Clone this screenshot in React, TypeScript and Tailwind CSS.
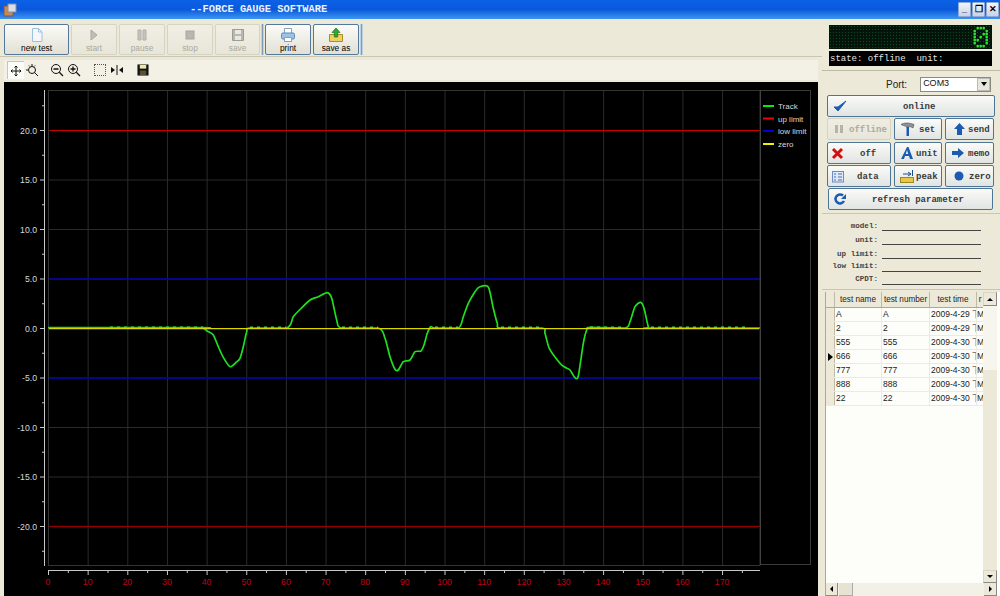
import React from 'react';

const track: [number, number][] = [
  [48, 327.6], [201, 327.6], [204, 328.6], [207, 331], [213.3, 335], [218.3, 346.7], [223.3, 357.3], [230, 366.7], [236, 362.5], [240, 358.3], [243.3, 346.7], [246.7, 331.7], [250, 328],
  [286.7, 328], [293.3, 316.7], [301, 308.5], [310, 300], [318.3, 296.7], [327.3, 292.7], [331.7, 298.3], [336.7, 320], [341.7, 328],
  [378.3, 328], [385, 338.3], [390, 356.7], [395, 369.3], [398.3, 370], [403.3, 361.7], [410, 360], [415, 351.7], [421, 351], [424, 345], [427.3, 333.3], [430.7, 326.7], [435, 328],
  [458.3, 328], [463.3, 316.7], [468.3, 303.3], [475, 291.7], [479.3, 287], [488.3, 287], [493.3, 308.3], [497.3, 323.3], [500.7, 328],
  [541.7, 328], [545, 333.3], [549.3, 348.3], [560, 363.3], [565, 367.3], [570, 370], [575, 377.7], [578.3, 376], [583.3, 343.3], [586.7, 330], [590, 327.3],
  [625, 328], [630, 321.7], [635, 306.7], [640.7, 302.3], [644, 308.3], [648.3, 326.7], [650.7, 328], [760, 328],
];

// catmull-rom through the sampled points, the plot in the picture is smoothed
const smooth = (pts: [number, number][]) => {
  let d = `M${pts[0][0]} ${pts[0][1]}`;
  for (let i = 0; i < pts.length - 1; i++) {
    const p0 = pts[i - 1] || pts[i];
    const p1 = pts[i];
    const p2 = pts[i + 1];
    const p3 = pts[i + 2] || p2;
    const long = p2[0] - p1[0] > 15;
    const k = long ? 0 : 1 / 8;
    d += ` C${p1[0] + (p2[0] - p0[0]) * k} ${p1[1] + (p2[1] - p0[1]) * k} ${p2[0] - (p3[0] - p1[0]) * k} ${p2[1] - (p3[1] - p1[1]) * k} ${p2[0]} ${p2[1]}`;
  }
  return d;
};

const xTicks = Array.from({ length: 18 }, (_, i) => i * 10);
const yTicks = [20, 15, 10, 5, 0, -5, -10, -15, -20];
const xPos = (v: number) => 44 + v * 3.965;
const yPos = (v: number) => 246.5 - v * 9.9;

const rows = [
  ['A', 'A', '2009-4-29 下午'],
  ['2', '2', '2009-4-29 下午'],
  ['555', '555', '2009-4-30 下午'],
  ['666', '666', '2009-4-30 下午'],
  ['777', '777', '2009-4-30 下午'],
  ['888', '888', '2009-4-30 下午'],
  ['22', '22', '2009-4-30 下午'],
];

const Ico = ({ children }: { children: React.ReactNode }) => (
  <svg width="16" height="16" viewBox="0 0 16 16" className="shrink-0">
    {children}
  </svg>
);

const ToolBtn = ({ w, label, off, children }: { w: string; label: string; off?: boolean; children: React.ReactNode }) => (
  <div
    className={`${w} h-[31px] flex flex-col items-center justify-between pt-[2px] pb-[1px] rounded-[2px] border bg-gradient-to-b ${
      off ? 'border-[#d6d3c2] from-[#f1efe4] to-[#e8e6d9] text-[#a9a99f]' : 'border-[#54789c] from-[#fbfbf8] to-[#e2e0d4] text-black'
    }`}
  >
    {children}
    <span className="leading-[11px]">{label}</span>
  </div>
);

const SideBtn = ({ w, label, off, cls, children }: { w: string; label: string; off?: boolean; cls: string; children: React.ReactNode }) => (
  <div
    className={`${w} h-[22px] flex items-center rounded-[2px] border bg-gradient-to-b ${cls} ${
      off ? 'border-[#d6d3c2] from-[#efede2] to-[#e8e6d9] text-[#aaa9a0]' : 'border-[#4f7596] from-[#fbfbf8] to-[#e0e4e2] text-[#3a3a3a]'
    }`}
  >
    {children}
    <span className="font-bold whitespace-pre pt-[4px]">{label}</span>
  </div>
);

const Sep = () => <div className="w-[3px] h-[31px] bg-[#7f9db9] border-x border-[#bcd0e0] -mx-[1px]" />;

const Led = () => {
  const glyph = ['01110', '10001', '10011', '10101', '11001', '10001', '01110'];
  return (
    <svg width="16" height="22" viewBox="0 0 16 22" className="mr-[3px]">
      {glyph.map((r, y) =>
        r.split('').map((c, x) =>
          c === '1' ? <rect key={`${x}-${y}`} x={x * 3 + 0.5} y={y * 3 + 1} width="2.4" height="2.4" fill="#2fe02f" /> : null,
        ),
      )}
    </svg>
  );
};

const Chart = () => (
  <svg viewBox="0 0 814 514" className="w-[814px] h-[514px] block bg-black font-['Liberation_Sans',sans-serif]">
    {xTicks.map((v) => (
      <line key={v} x1={xPos(v) + 0.5} x2={xPos(v) + 0.5} y1="8" y2="483" stroke="#2b2b2b" />
    ))}
    {yTicks.map((v) => (
      <line key={v} x1="44" x2="756" y1={yPos(v)} y2={yPos(v)} stroke="#2b2b2b" />
    ))}
    <rect x="44.5" y="8.5" width="711.5" height="475" fill="none" stroke="#333" />
    <rect x="756.5" y="8.5" width="50" height="474" fill="#000" stroke="#777" strokeDasharray="1 1" />

    {/* y axis */}
    <line x1="40.5" x2="40.5" y1="8" y2="484" stroke="#c8c8c8" />
    {yTicks.map((v) => (
      <g key={v}>
        <line x1="36" x2="40" y1={yPos(v)} y2={yPos(v)} stroke="#c8c8c8" />
        <text x="33" y={yPos(v) + 3} textAnchor="end" fontSize="8.7" fill="#d8d8d8">
          {v.toFixed(1)}
        </text>
      </g>
    ))}
    {[22.5, 17.5, 12.5, 7.5, 2.5, -2.5, -7.5, -12.5, -17.5, -22.5].map((v) => (
      <line key={v} x1="38" x2="40" y1={yPos(v)} y2={yPos(v)} stroke="#c8c8c8" />
    ))}

    {/* x axis */}
    <line x1="44" x2="756" y1="488.5" y2="488.5" stroke="#c8c8c8" />
    {xTicks.map((v) => (
      <g key={v}>
        <line x1={xPos(v) + 0.5} x2={xPos(v) + 0.5} y1="489" y2="493" stroke="#c8c8c8" />
        <line x1={xPos(v + 5) + 0.5} x2={xPos(v + 5) + 0.5} y1="489" y2="491" stroke="#c8c8c8" />
        <text x={xPos(v)} y="503" textAnchor="middle" fontSize="8.7" fill="#c00018">
          {v}
        </text>
      </g>
    ))}

    {/* limits */}
    <line x1="45" x2="755" y1="48.5" y2="48.5" stroke="#c80000" strokeWidth="1.2" />
    <line x1="45" x2="755" y1="444.5" y2="444.5" stroke="#900000" strokeWidth="1.4" />
    <line x1="45" x2="755" y1="197" y2="197" stroke="#0000b0" strokeWidth="1.3" />
    <line x1="45" x2="755" y1="296" y2="296" stroke="#0000b0" strokeWidth="1.3" />

    {/* track: points are in page coordinates */}
    <g transform="translate(-4 -82)">
      <path d={smooth(track)} fill="none" stroke="#1fe01f" strokeWidth="1.7" strokeLinejoin="round" />
      {[[110, 203], [250, 286], [342, 378], [435, 458], [501, 541], [590, 625], [651, 745]].map(([a, b]) => (
        <line key={a} x1={a} x2={b} y1="327.4" y2="327.4" stroke="#33ee33" strokeWidth="2" strokeDasharray="3 4" />
      ))}
      <line x1="49" x2="759" y1="328.6" y2="328.6" stroke="#d8d800" strokeWidth="1.2" />
    </g>

    {/* legend */}
    {[
      ['Track', '#00f000', 24],
      ['up limit', '#f00000', 36.5],
      ['low limit', '#0000e0', 49],
      ['zero', '#f0f000', 62],
    ].map(([t, c, y]) => (
      <g key={t as string}>
        <line x1="759" x2="770" y1={y as number} y2={y as number} stroke={c as string} strokeWidth="2" />
        <text x="774" y={(y as number) + 3} fontSize="8" fill="#d8d8d8">
          {t}
        </text>
      </g>
    ))}
  </svg>
);

export default function App() {
  return (
    <div className="w-[1000px] h-[596px] overflow-hidden flex flex-col bg-[#ece9d8] font-['Liberation_Sans',sans-serif] text-[8.3px] text-black">
      {/* title bar */}
      <div className="h-[19px] shrink-0 flex items-center bg-gradient-to-b from-[#0b62e6] via-[#0a58dc] to-[#3d95f0]">
        <svg width="14" height="14" viewBox="0 0 14 14" className="ml-[3px]">
          <rect x="1" y="3" width="9" height="10" fill="#c78a52" stroke="#7a5a50" />
          <rect x="5" y="1" width="8" height="8" fill="#d8dfe8" stroke="#8d8d9a" />
        </svg>
        <span className="ml-[173px] font-['Liberation_Mono',monospace] font-bold text-[10.4px] text-[#e8f2ff] whitespace-pre">--FORCE GAUGE SOFTWARE</span>
        <div className="ml-auto flex gap-[1px] pr-[1px]">
          {['_', '❐', '✕'].map((c) => (
            <div key={c} className="w-[13px] h-[15px] flex items-center justify-center bg-gradient-to-b from-[#f2f4fa] to-[#c6d3ea] border border-[#8fa9d6] rounded-[1px] text-[9px] font-bold text-black leading-none">
              {c}
            </div>
          ))}
        </div>
      </div>

      <div className="flex-1 flex min-h-0">
        {/* left side */}
        <div className="w-[822px] shrink-0 flex flex-col">
          <div className="h-[38px] shrink-0 flex items-start gap-[2px] pl-[4px] pt-[5px] border-b border-[#c8c5b2]">
            <ToolBtn w="w-[65px]" label="new test">
              <Ico>
                <path d="M3.5 1.5h6l3.5 3.5v9.5h-9.5z M9.5 1.5v3.5h3.5" fill="#f4f8fc" stroke="#9fc0dc" />
              </Ico>
            </ToolBtn>
            <ToolBtn w="w-[46px]" label="start" off>
              <Ico>
                <path d="M5 3l6 5-6 5z" fill="#c0c0b8" stroke="#a8a8a0" />
              </Ico>
            </ToolBtn>
            <ToolBtn w="w-[46px]" label="pause" off>
              <Ico>
                <path d="M4 3h3v10H4zM9 3h3v10H9z" fill="#c4c4bc" stroke="#b0b0a8" />
              </Ico>
            </ToolBtn>
            <ToolBtn w="w-[46px]" label="stop" off>
              <Ico>
                <rect x="4" y="4" width="8" height="8" fill="#b8b8b0" stroke="#a8a8a0" />
              </Ico>
            </ToolBtn>
            <ToolBtn w="w-[45px]" label="save" off>
              <Ico>
                <path d="M2.5 2.5h11v11h-11z" fill="#b8b8b0" stroke="#9c9c94" />
                <rect x="5" y="3" width="6" height="4" fill="#e8e8e0" />
                <rect x="5" y="9" width="6" height="4" fill="#e8e8e0" />
              </Ico>
            </ToolBtn>
            <Sep />
            <ToolBtn w="w-[46px]" label="print">
              <Ico>
                <path d="M4.5 1.5h7v5h-7z" fill="#fff" stroke="#8aa0bc" />
                <rect x="1.5" y="6" width="13" height="6" rx="1.5" fill="#9cc4e8" stroke="#5a88bc" />
                <rect x="4.5" y="10.5" width="7" height="4" fill="#fff" stroke="#8aa0bc" />
              </Ico>
            </ToolBtn>
            <ToolBtn w="w-[46px]" label="save as">
              <Ico>
                <path d="M1.5 7.5h13v7h-13z" fill="#f2d060" stroke="#a88a30" />
                <path d="M8 1l4 4.5H9.7V10H6.3V5.500H4z" fill="#2fa82f" stroke="#1c701c" strokeWidth="0.7" />
              </Ico>
            </ToolBtn>
            <Sep />
          </div>

          <div className="h-[20px] shrink-0 mt-[3px] flex items-center bg-[#f3f1e6] ml-[4px] mr-[4px] pl-[3px]">
            <div className="w-[17px] h-[18px] flex items-center justify-center bg-[#fbfbf8] border-l border-t border-[#c8c5b2]">
              <svg width="12" height="12" viewBox="0 0 12 12" stroke="#111" fill="none">
                <path d="M6 1v10M1 6h10M6 1L4.500 2.500M6 1l1.500 1.500M6 11L4.500 9.500M6 11l1.500-1.500M1 6l1.500-1.500M1 6l1.500 1.500M11 6L9.500 4.500M11 6L9.500 7.500" />
              </svg>
            </div>
            <svg width="14" height="14" viewBox="0 0 14 14" stroke="#111" fill="none" className="ml-[1px]">
              <circle cx="7" cy="7" r="3.500" />
              <path d="M9.500 9.500L13 13M7 1v2M4 2.500l1 1M10 2.500L9 3.500M1 7h2" />
            </svg>
            <svg width="14" height="14" viewBox="0 0 14 14" stroke="#111" fill="none" className="ml-[11px]">
              <circle cx="6" cy="6" r="4.500" />
              <path d="M9.300 9.300L13 13M3.500 6h5" strokeWidth="1.300" />
            </svg>
            <svg width="14" height="14" viewBox="0 0 14 14" stroke="#111" fill="none" className="ml-[3px]">
              <circle cx="6" cy="6" r="4.500" />
              <path d="M9.300 9.300L13 13M3.500 6h5M6 3.500v5" strokeWidth="1.300" />
            </svg>
            <div className="w-[12px] h-[12px] ml-[13px] border border-dotted border-[#555]" />
            <svg width="12" height="12" viewBox="0 0 12 12" fill="#111" className="ml-[5px]">
              <path d="M0 3l4 3-4 3zM12 3L8 6l4 3zM5.500 1h1v10h-1z" />
            </svg>
            <svg width="12" height="12" viewBox="0 0 13 13" className="ml-[14px]">
              <rect x="0.500" y="0.500" width="12" height="12" fill="#111" />
              <rect x="3" y="1" width="7" height="4" fill="#f2e6a0" />
              <rect x="3" y="7" width="7" height="5" fill="#57503a" />
            </svg>
          </div>

          <div className="mt-[2px] ml-[4px] flex-1 min-h-0">
            <Chart />
          </div>
        </div>

        {/* right side */}
        <div className="w-[178px] shrink-0 flex flex-col font-['Liberation_Mono',monospace] text-[9px] bg-[#ece9d8]">
          <div className="h-[52px] shrink-0 pl-[7px] pt-[6px] border-b border-[#bdbaa6]">
            <div className="w-[163px] h-[24px] bg-[#03150a] bg-[radial-gradient(#0d4a20_1px,transparent_1px)] bg-[length:3px_3px] flex items-center justify-end">
              <Led />
            </div>
            <div className="w-[163px] h-[15px] mt-[2px] bg-black text-[#e4e4e4] flex items-center whitespace-pre pl-[1px] pt-[2px]">
              {'state: offline  unit:'}
            </div>
          </div>

          <div className="h-[23px] shrink-0 flex items-center pt-[3px] font-['Liberation_Sans',sans-serif] text-[10px]">
            <span className="ml-[64px] text-[#222]">Port:</span>
            <div className="ml-[13px] w-[71px] h-[15px] bg-white border border-[#8c8a7c] flex items-center justify-between pl-[2px] text-[9px] text-[#111]">
              <span>COM3</span>
              <div className="w-[13px] h-[13px] bg-[#e8e6da] border border-[#bbb] flex items-center justify-center">
                <div className="w-0 h-0 border-x-[3px] border-x-transparent border-t-[4px] border-t-black" />
              </div>
            </div>
          </div>

          <div className="flex flex-col pl-[5px]">
            <div className="mt-[1px] w-[168px] h-[22px] flex items-center rounded-[2px] border border-[#4f7596] bg-gradient-to-b from-[#fbfbf8] to-[#e0e4e2] pl-[5px] text-[#3a3a3a]">
              <svg width="14" height="14" viewBox="0 0 14 14">
                <path d="M1 8l4 4 8-10-8 6z" fill="#1c5cb0" stroke="#1c5cb0" />
              </svg>
              <span className="ml-[56px] font-bold pt-[4px]">online</span>
            </div>
            <div className="flex gap-[3px] mt-[1px]">
              <SideBtn w="w-[64px]" label="offline" off cls="pl-[6px] gap-[5px]">
                <svg width="10" height="12" viewBox="0 0 10 12" fill="#b4b4ac"><path d="M1 2h3v8H1zM6 2h3v8H6z" /></svg>
              </SideBtn>
              <SideBtn w="w-[48px]" label="set" cls="pl-[5px] gap-[3px]">
                <svg width="16" height="16" viewBox="0 0 16 16">
                  <path d="M1 3.500C4 1.500 9 1.500 14 3.500L13 7C11 5.500 9.500 5.500 9 6H6.500C5.500 5 3 4.500 1 3.500z" fill="#8c9098" stroke="#4a5060" strokeWidth="0.6" />
                  <rect x="6.500" y="6" width="2.500" height="9" fill="#1c5cb0" />
                </svg>
              </SideBtn>
              <SideBtn w="w-[49px]" label="send" cls="pl-[7px] gap-[2px]">
                <svg width="13" height="14" viewBox="0 0 13 14"><path d="M6.500 1l5.500 6H9v6H4V7H1z" fill="#1c5cb0" /></svg>
              </SideBtn>
            </div>
            <div className="flex gap-[3px] mt-[2px]">
              <SideBtn w="w-[64px]" label="off" cls="pl-[3px] gap-[16px]">
                <svg width="13" height="13" viewBox="0 0 13 13" stroke="#d01010" strokeWidth="3"><path d="M2 2l9 9M11 2l-9 9" /></svg>
              </SideBtn>
              <SideBtn w="w-[48px]" label="unit" cls="pl-[5px] gap-[2px]">
                <svg width="14" height="14" viewBox="0 0 14 14"><path d="M7 1h1.500L13 13h-3l-1-3H5l-1 3H1zM5.800 8h2.400L7 4z" fill="#1c5cb0" fillRule="evenodd" /></svg>
              </SideBtn>
              <SideBtn w="w-[49px]" label="memo" cls="pl-[5px] gap-[3px]">
                <svg width="14" height="12" viewBox="0 0 14 12"><path d="M13 6L7 1v3H1v4h6v3z" fill="#1c5cb0" /></svg>
              </SideBtn>
            </div>
            <div className="flex gap-[3px] mt-[1px]">
              <SideBtn w="w-[64px]" label="data" cls="pl-[3px] gap-[12px]">
                <svg width="14" height="14" viewBox="0 0 14 14"><rect x="1.500" y="2.500" width="11" height="10.500" fill="#dfe8f4" stroke="#6a8cc0" /><path d="M3 5h2M7 5h4M3 8h2M7 8h4M3 11h2M7 11h4" stroke="#456fb0" /></svg>
              </SideBtn>
              <SideBtn w="w-[48px]" label="peak" cls="pl-[5px] gap-[1px]">
                <svg width="15" height="14" viewBox="0 0 15 14"><rect x="0.500" y="8.500" width="13" height="5" fill="#e8c840" stroke="#a08820" /><path d="M3 5h8M8 3l3 2-3 2M12.500 1v6" stroke="#1c4c90" fill="none" /></svg>
              </SideBtn>
              <SideBtn w="w-[49px]" label="zero" cls="pl-[7px] gap-[4px]">
                <svg width="12" height="12" viewBox="0 0 12 12"><circle cx="6" cy="6" r="4.500" fill="#1c5cb0" /></svg>
              </SideBtn>
            </div>
            <div className="w-[165px] h-[22px] flex items-center rounded-[2px] border border-[#4f7596] bg-gradient-to-b from-[#fbfbf8] to-[#e0e4e2] pl-[4px] ml-[1px] mt-[1px] text-[#3a3a3a]">
              <svg width="14" height="14" viewBox="0 0 14 14" fill="none">
                <path d="M11 9a4.500 4.500 0 1 1-1-5.500" stroke="#1c5cb0" strokeWidth="2.500" />
                <path d="M13 2v5H8z" fill="#1c5cb0" />
              </svg>
              <span className="ml-[25px] font-bold pt-[4px]">refresh parameter</span>
            </div>
          </div>

          <div className="mt-[3px] h-[77px] shrink-0 border-y border-[#c8c5b2] pt-[4px] text-[7.6px] font-bold text-[#444]">
            {[
              ['model:', 'h-[13px]', 'mt-[3px]'],
              ['unit:', 'h-[14px]', 'mt-[4px]'],
              ['up limit:', 'h-[14px]', 'mt-[4px]'],
              ['low limit:', 'h-[13px]', 'mt-[2px]'],
              ['CPDT:', 'h-[13px]', 'mt-[2px]'],
            ].map(([t, h, m]) => (
              <div key={t} className={`flex items-start ${h}`}>
                <span className={`w-[56px] text-right whitespace-nowrap leading-[11px] ${m}`}>{t}</span>
                <div className="ml-[4px] w-[99px] h-full border-b border-[#444]" />
              </div>
            ))}
          </div>

          {/* table */}
          <div className="mt-[2px] ml-[3px] flex-1 min-h-0 flex flex-col bg-[#fdfdf9] border-l border-[#aaa89a] font-['Liberation_Sans',sans-serif] text-[8.5px] text-[#222]">
            <div className="flex-1 min-h-0 flex">
              <div className="w-[157px] shrink-0 flex flex-col">
                <div className="h-[16px] flex bg-[#ece9d8] border-b border-[#aca899] text-center leading-[15px] text-[8.2px]">
                  <div className="w-[9px] border-r border-[#bdbaa6]" />
                  <div className="w-[47px] border-r border-[#bdbaa6]">test name</div>
                  <div className="w-[48px] border-r border-[#bdbaa6] overflow-hidden whitespace-nowrap">test number</div>
                  <div className="w-[47px] border-r border-[#bdbaa6]">test time</div>
                  <div className="w-[6px] overflow-hidden">r</div>
                </div>
                {rows.map(([a, b, c]) => (
                  <div key={a} className="h-[14px] flex border-b border-[#ecebe2] leading-[12px]">
                    <div className="w-[9px] bg-[#ece9d8] border-r border-[#bdbaa6] flex items-center justify-center">
                      {a === '666' && <div className="w-0 h-0 border-y-[4px] border-y-transparent border-l-[5px] border-l-black" />}
                    </div>
                    <div className="w-[47px] pl-[1px] border-r border-[#ecebe2]">{a}</div>
                    <div className="w-[48px] pl-[1px] border-r border-[#ecebe2]">{b}</div>
                    <div className="w-[47px] pl-[1px] border-r border-[#ecebe2] overflow-hidden whitespace-nowrap font-['Liberation_Sans','Noto_Sans_CJK_SC',sans-serif]">{c}</div>
                    <div className="w-[6px] overflow-hidden">M</div>
                  </div>
                ))}
              </div>
              <div className="w-[14px] shrink-0 flex flex-col bg-[#f3f1e6]">
                <div className="h-[14px] bg-[#ece9d8] border border-[#d8d5c4] border-r-[#888] border-b-[#888] flex items-center justify-center">
                  <div className="w-0 h-0 border-x-[3px] border-x-transparent border-b-[3px] border-b-black" />
                </div>
                <div className="h-[64px] bg-[#f7f6ee]" />
                <div className="flex-1 bg-[#ece9d8]" />
                <div className="h-[13px] bg-[#ece9d8] border border-[#d8d5c4] border-r-[#888] border-b-[#888] flex items-center justify-center">
                  <div className="w-0 h-0 border-x-[3px] border-x-transparent border-t-[3px] border-t-black" />
                </div>
              </div>
            </div>
            <div className="h-[13px] shrink-0 flex w-[171px] bg-[#f3f1e6]">
              <div className="w-[12px] bg-[#ece9d8] border-r border-b border-[#888] flex items-center justify-center">
                <div className="w-0 h-0 border-y-[3px] border-y-transparent border-r-[3px] border-r-black" />
              </div>
              <div className="w-[14px] ml-[1px] bg-[#e6e3d2] border-r border-b border-[#aaa]" />
              <div className="flex-1" />
              <div className="w-[13px] bg-[#ece9d8] border-r border-b border-[#888] flex items-center justify-center">
                <div className="w-0 h-0 border-y-[3px] border-y-transparent border-l-[3px] border-l-black" />
              </div>
            </div>
          </div>
        </div>
      </div>
    </div>
  );
}
